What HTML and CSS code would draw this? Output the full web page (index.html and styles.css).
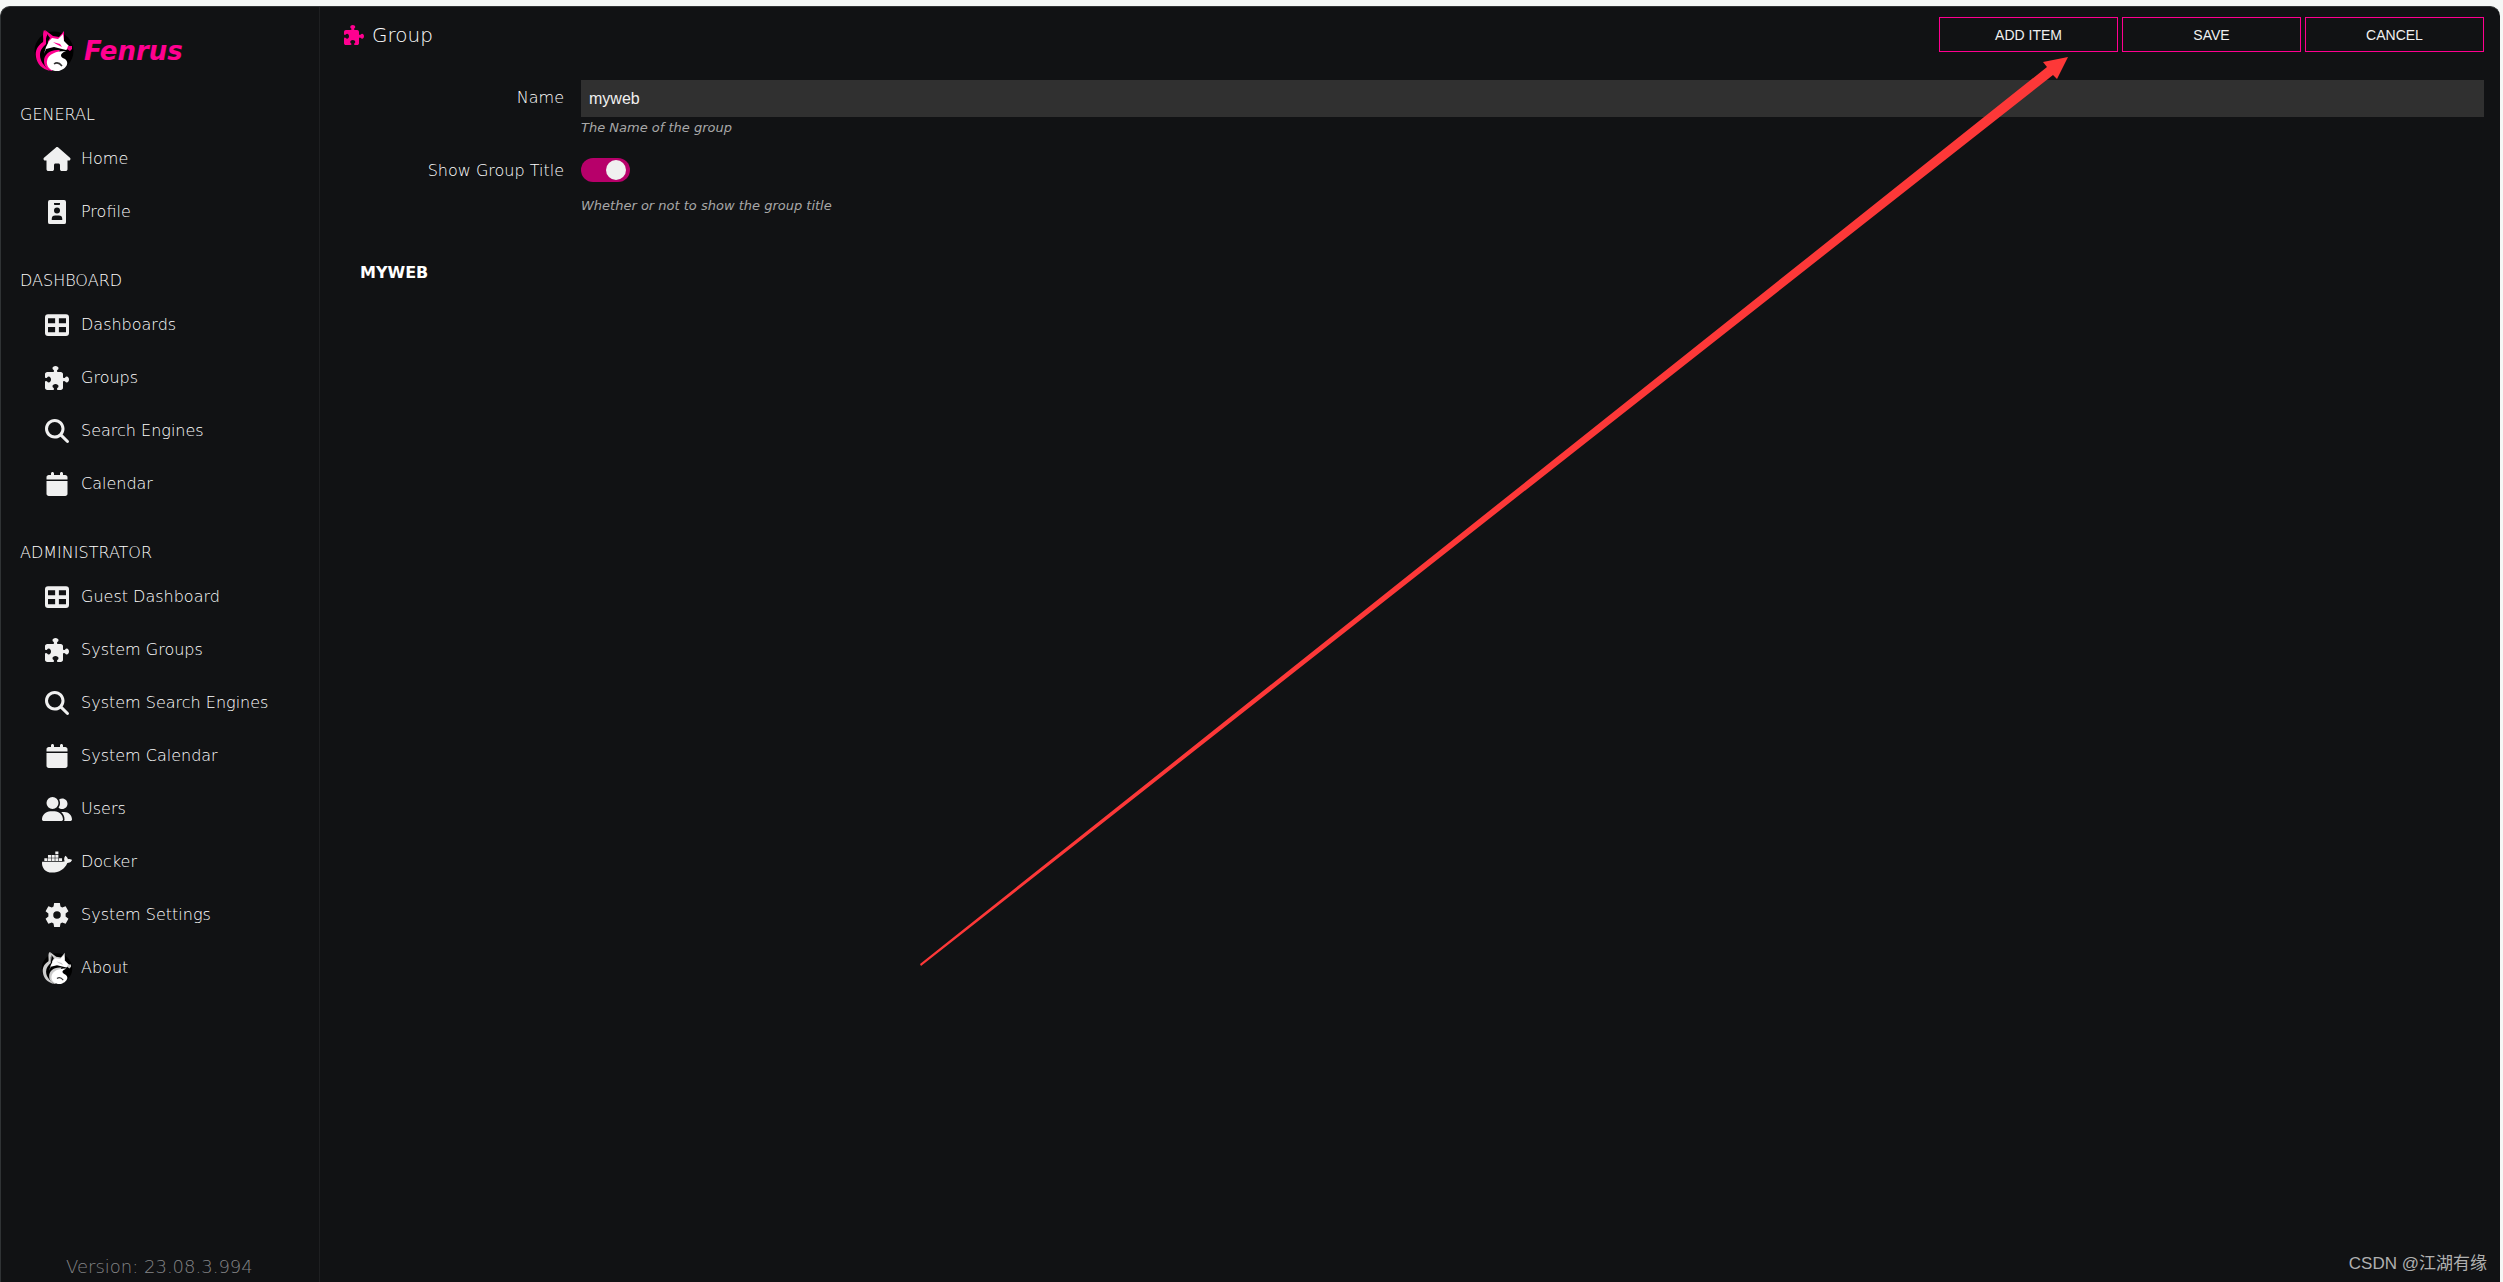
FILE: index.html
```html
<!DOCTYPE html>
<html lang="en">
<head>
    <meta charset="UTF-8">
    <meta name="viewport" content="width=device-width, initial-scale=1.0">
    <title>Fenrus</title>
    <link rel="stylesheet" href="styles.css">
</head>
<body>
    <svg class="sprite" aria-hidden="true">
        <symbol id="home" viewBox="0 0 576 512"><path d="M575.8 255.500c0 18-15 32.100-32 32.100h-32l.7 160.200c0 2.700-.2 5.400-.5 8.100V472c0 22.100-17.900 40-40 40H456c-1.100 0-2.200 0-3.300-.1c-1.400 .1-2.800 .1-4.200 .1H416 392c-22.100 0-40-17.900-40-40V448 384c0-17.700-14.300-32-32-32H256c-17.700 0-32 14.300-32 32v64 24c0 22.100-17.900 40-40 40H160 128.100c-1.500 0-3-.1-4.500-.2c-1.200 .1-2.400 .2-3.600 .2H104c-22.100 0-40-17.900-40-40V360c0-.9 0-1.900 .1-2.800V287.600H32c-18 0-32-14-32-32.100c0-9 3-17 10-24L266.400 8c7-7 15-8 22-8s15 2 21 7L564.800 231.500c8 7 12 15 11 24z"/></symbol>
        <symbol id="profile" viewBox="0 0 384 512"><path fill-rule="evenodd" d="M0 40Q0 0 40 0H344Q384 0 384 40V472Q384 512 344 512H40Q0 512 0 472ZM128 64V88Q128 104 144 104H240Q256 104 256 88V64ZM192 288a64 64 0 1 0 0-128a64 64 0 1 0 0 128ZM80 424H304V400Q304 328 232 328H152Q80 328 80 400Z"/></symbol>
        <symbol id="grid" viewBox="0 0 512 512"><path fill-rule="evenodd" d="M64 24H448Q512 24 512 88V424Q512 488 448 488H64Q0 488 0 424V88Q0 24 64 24ZM64 112V216H216V112ZM296 112V216H448V112ZM64 296V408H216V296ZM296 296V408H448V296Z"/></symbol>
        <symbol id="puzzle" viewBox="0 0 512 512"><path d="M192 104.800c0-9.200-5.800-17.300-13.200-22.800C167.200 73.300 160 61.300 160 48c0-26.500 28.700-48 64-48s64 21.500 64 48c0 13.300-7.200 25.300-18.800 34c-7.400 5.500-13.200 13.600-13.200 22.800c0 12.800 10.400 23.200 23.200 23.200H336c26.500 0 48 21.500 48 48v56.800c0 12.800 10.400 23.200 23.200 23.200c9.200 0 17.300-5.800 22.800-13.200c8.700-11.600 20.700-18.800 34-18.800c26.500 0 48 28.700 48 64s-21.500 64-48 64c-13.300 0-25.300-7.200-34-18.800c-5.500-7.400-13.600-13.200-22.800-13.200c-12.800 0-23.200 10.400-23.200 23.200V464c0 26.500-21.500 48-48 48H279.200c-12.800 0-23.200-10.400-23.200-23.200c0-9.200 5.800-17.300 13.200-22.800c11.600-8.700 18.800-20.700 18.800-34c0-26.500-28.700-48-64-48s-64 21.500-64 48c0 13.300 7.200 25.300 18.800 34c7.400 5.500 13.200 13.600 13.200 22.800c0 12.800-10.400 23.200-23.200 23.200H48c-26.500 0-48-21.500-48-48V343.200C0 330.400 10.400 320 23.200 320c9.200 0 17.300 5.800 22.800 13.200C54.700 344.800 66.700 352 80 352c26.500 0 48-28.700 48-64s-21.500-64-48-64c-13.300 0-25.300 7.200-34 18.800C40.500 250.200 32.400 256 23.200 256C10.400 256 0 245.600 0 232.800V176c0-26.500 21.500-48 48-48H168.800c12.800 0 23.200-10.400 23.200-23.200z"/></symbol>
        <symbol id="search" viewBox="0 0 512 512"><path d="M416 208c0 45.900-14.900 88.300-40 122.700L502.600 457.400c12.500 12.500 12.500 32.800 0 45.300s-32.800 12.500-45.300 0L330.700 376c-34.400 25.200-76.800 40-122.700 40C93.100 416 0 322.900 0 208S93.100 0 208 0S416 93.100 416 208zM208 352a144 144 0 1 0 0-288 144 144 0 1 0 0 288z"/></symbol>
        <symbol id="calendar" viewBox="0 0 448 512"><path d="M96 32V64H48C21.500 64 0 85.500 0 112v48H448V112c0-26.500-21.500-48-48-48H352V32c0-17.700-14.300-32-32-32s-32 14.300-32 32V64H160V32c0-17.700-14.300-32-32-32S96 14.300 96 32zM448 192H0V464c0 26.500 21.500 48 48 48H400c26.500 0 48-21.500 48-48V192z"/></symbol>
        <symbol id="users" viewBox="0 0 640 512"><path d="M96 128a128 128 0 1 1 256 0A128 128 0 1 1 96 128zM0 482.300C0 383.800 79.800 304 178.300 304h91.400C368.200 304 448 383.800 448 482.300c0 16.400-13.300 29.700-29.700 29.700H29.700C13.300 512 0 498.700 0 482.300zM609.300 512H471.400c5.400-9.400 8.600-20.300 8.600-32v-8c0-60.700-27.100-115.200-69.800-151.800c2.400-.1 4.700-.2 7.100-.2h61.400C567.800 320 640 392.200 640 481.300c0 17-13.800 30.700-30.700 30.700zM432 256c-31 0-59-12.600-79.300-32.900C372.400 196.500 384 163.600 384 128c0-26.800-6.600-52.100-18.300-74.300C384.300 40.100 407.200 32 432 32c61.900 0 112 50.100 112 112s-50.100 112-112 112z"/></symbol>
        <symbol id="docker" viewBox="0 0 640 512"><path d="M349.900 236.300h-66.100v-59.400h66.100zm0-204.300h-66.100v60.700h66.100zm78.200 144.800H362v59.400h66.100zm-156.300-72.100h-66.100v60.100h66.100zm78.100 0h-66.100v60.100h66.100zm276.800 100c-14.400-9.700-47.600-13.200-73.100-8.400-3.300-24-16.700-44.900-41.100-63.700l-14-9.300-9.300 14c-18.400 27.800-23.400 73.600-3.700 103.800-8.700 4.700-25.800 11.100-48.400 10.700H2.400c-8.700 50.800 5.800 116.800 44 162.100 37.100 43.900 92.700 66.200 165.400 66.200 157.400 0 273.900-72.500 328.400-204.200 21.400.4 67.600.1 91.300-45.200 1.500-2.500 6.600-13.200 8.500-17.100zM115.600 176.900H49.500v59.400h66.100zm78.100 0h-66.100v59.400h66.100zm78.100 0h-66.100v59.400h66.100zm-78.100-72.100h-66.100v60.100h66.100z"/></symbol>
        <symbol id="gear" viewBox="0 0 512 512"><path fill-rule="evenodd" d="M195 0H317L330 77L366 98L440 70L500 176L440 225V287L500 336L440 442L366 414L330 435L317 512H195L182 435L146 414L72 442L12 336L72 287V225L12 176L72 70L146 98L182 77ZM256 336a80 80 0 1 0 0-160a80 80 0 1 0 0 160Z"/></symbol>
        <symbol id="fox" viewBox="0 0 40 41">
            <circle cx="20" cy="21" r="19.500" fill="#000"/>
            <!-- back and tail outline -->
            <path class="fox-accent" d="M10 0C8 5 10 9 9 12C3 16 1 21 2 27C3 34 8 39 16 41C10 36 6 31 6 25C6 20 9 17 12 14L12 6L18 8Z"/>
            <path class="fox-accent" d="M26 20C15 19 10 25 10 31C10 36 13 40 18 41L24 23Z"/>
            <!-- ears -->
            <path class="fox-accent" d="M11 0L19 6L25 7L30 1L30 10L14 13Z"/>
            <path fill="#000" d="M13 4L16 8L13 13Z"/>
            <!-- head -->
            <path fill="#fff" d="M12 17L15 11L18 8L24 9L29 4L30 11L36 17L32 20L20 17L12 19L10 24Z"/>
            <path class="fox-accent" d="M19 12L26 14L28 17L22 14ZM34 16L38 16L38 19L36 21L33 19Z"/>
            <!-- tail -->
            <path fill="#fff" d="M32 21C25 24 26 27 31 29C36 33 32 39 25 41C17 42 12 37 13 31C14 24 22 21 32 21Z"/>
            <path fill="none" stroke="#333" stroke-width="1.500" d="M20 34Q24 31 28 36"/>
        </symbol>
    </svg>
    <div class="app">
        <aside class="sidebar">
            <a class="brand" href="#">
                <svg class="brand-logo"><use href="#fox"/></svg>
                <span>Fenrus</span>
            </a>
            <nav>
                <section class="nav-group">
                    <h2>GENERAL</h2>
                    <ul>
                        <li><a href="#"><svg><use href="#home"/></svg>Home</a></li>
                        <li><a href="#"><svg><use href="#profile"/></svg>Profile</a></li>
                    </ul>
                </section>
                <section class="nav-group">
                    <h2>DASHBOARD</h2>
                    <ul>
                        <li><a href="#"><svg><use href="#grid"/></svg>Dashboards</a></li>
                        <li><a href="#"><svg><use href="#puzzle"/></svg>Groups</a></li>
                        <li><a href="#"><svg><use href="#search"/></svg>Search Engines</a></li>
                        <li><a href="#"><svg><use href="#calendar"/></svg>Calendar</a></li>
                    </ul>
                </section>
                <section class="nav-group">
                    <h2>ADMINISTRATOR</h2>
                    <ul>
                        <li><a href="#"><svg><use href="#grid"/></svg>Guest Dashboard</a></li>
                        <li><a href="#"><svg><use href="#puzzle"/></svg>System Groups</a></li>
                        <li><a href="#"><svg><use href="#search"/></svg>System Search Engines</a></li>
                        <li><a href="#"><svg><use href="#calendar"/></svg>System Calendar</a></li>
                        <li><a href="#"><svg><use href="#users"/></svg>Users</a></li>
                        <li><a href="#"><svg><use href="#docker"/></svg>Docker</a></li>
                        <li><a href="#"><svg><use href="#gear"/></svg>System Settings</a></li>
                        <li><a href="#"><svg class="about-logo"><use href="#fox"/></svg>About</a></li>
                    </ul>
                </section>
            </nav>
            <div class="version">Version: 23.08.3.994</div>
        </aside>
        <main>
            <header class="top-bar">
                <h1><svg><use href="#puzzle"/></svg>Group</h1>
                <div class="actions">
                    <button type="button">ADD ITEM</button>
                    <button type="button">SAVE</button>
                    <button type="button">CANCEL</button>
                </div>
            </header>
            <form>
                <div class="field">
                    <label for="name">Name</label>
                    <div class="field-value">
                        <input type="text" id="name" value="myweb">
                        <p class="hint">The Name of the group</p>
                    </div>
                </div>
                <div class="field">
                    <label for="showTitle">Show Group Title</label>
                    <div class="field-value">
                        <input type="checkbox" class="switch" id="showTitle" checked>
                        <p class="hint">Whether or not to show the group title</p>
                    </div>
                </div>
            </form>
            <h3>MYWEB</h3>
        </main>
    </div>
    <svg class="arrow" viewBox="0 0 1148 909" aria-hidden="true"><path d="M0 907L1127 10L1123 5L1148 0L1137 22L1133 18L1 909Z"/></svg>
    <div class="watermark">CSDN @江湖有缘</div>
</body>
</html>
```
FILE: styles.css
```css
* {
    box-sizing: border-box;
}
body {
    margin: 0;
    padding: 6px 3px 0 0;
    height: 100vh;
    overflow: hidden;
    background: #f5f7f6;
    color: #fff;
    font-family: "DejaVu Sans", sans-serif;
    font-weight: 200;
    font-size: 16px;
    line-height: 20px;
}
h1, h2, h3, p, ul {
    margin: 0;
    padding: 0;
}
svg {
    fill: currentColor;
}
.sprite {
    display: none;
}
.app {
    display: flex;
    height: 100%;
    background: #111214;
    border: 1px solid #303335;
    border-width: 1px 0 0 1px;
    border-radius: 10px 10px 0 0;
}
.sidebar {
    width: 319px;
    flex: none;
    display: flex;
    flex-direction: column;
    border-right: 1px solid #1e1f21;
}
.brand {
    display: flex;
    align-items: center;
    gap: 10px;
    height: 65px;
    padding: 22px 0 0 33px;
    margin-bottom: 24px;
    color: #ff0090;
    font-size: 26px;
    font-weight: bold;
    font-style: italic;
    text-decoration: none;
}
.brand-logo {
    width: 40px;
    height: 41px;
}
.fox-accent {
    fill: var(--fox-accent, #ff0090);
}
.nav-group {
    margin-bottom: 24px;
}
.nav-group h2 {
    padding: 9px 19px 7px;
    font-size: 16px;
    font-weight: 200;
}
.nav-group ul {
    list-style: none;
}
.nav-group a {
    display: flex;
    align-items: center;
    gap: 8px;
    height: 53px;
    padding-left: 40px;
    color: #fff;
    text-decoration: none;
}
.nav-group svg {
    width: 32px;
    height: 24px;
    color: #f0f0f0;
}
.nav-group .about-logo {
    --fox-accent: #ccc;
    height: 32px;
}
.version {
    margin-top: auto;
    padding: 0 0 5px 65px;
    color: #848587;
    font-size: 18px;
}
main {
    flex: 1;
    padding: 10px 16px 0 24px;
}
.top-bar {
    display: flex;
    justify-content: space-between;
    margin-bottom: 28px;
}
h1 {
    display: flex;
    align-items: center;
    gap: 8px;
    font-size: 20px;
    font-weight: 200;
}
h1 svg {
    width: 20px;
    height: 20px;
    color: #ff0090;
}
.actions {
    display: flex;
    gap: 4px;
}
.actions button {
    width: 179px;
    height: 35px;
    background: none;
    border: 1px solid #ff0090;
    color: #f0f0f0;
    font: 14px "Liberation Sans", sans-serif;
}
.field {
    display: flex;
    gap: 17px;
    margin-bottom: 15px;
}
.field label {
    width: 220px;
    padding-top: 8px;
    text-align: right;
}
.field-value {
    flex: 1;
}
input[type="text"] {
    display: block;
    width: 100%;
    height: 37px;
    padding: 0 8px;
    background: #303030;
    border: none;
    color: #f0f0f0;
    font: 16px "Liberation Sans", sans-serif;
}
.hint {
    padding-top: 1px;
    color: #a8a8a8;
    font-size: 13px;
    font-style: italic;
}
.switch {
    appearance: none;
    display: flex;
    align-items: center;
    justify-content: flex-end;
    width: 49px;
    height: 24px;
    margin: 5px 0 13px;
    padding-right: 4px;
    background: #b7006a;
    border-radius: 12px;
}
.switch::before {
    content: "";
    width: 20px;
    height: 20px;
    background: #f0f0f0;
    border-radius: 50%;
}
h3 {
    padding: 32px 0 0 16px;
    font-size: 16px;
}
.arrow {
    position: absolute;
    left: 920px;
    top: 57px;
    width: 1148px;
    height: 909px;
    color: #fd3838;
    pointer-events: none;
}
.watermark {
    position: absolute;
    right: 16px;
    bottom: 8px;
    color: #b0b0b0;
    font: 17px "Liberation Sans", "Noto Sans CJK SC", sans-serif;
}
```
